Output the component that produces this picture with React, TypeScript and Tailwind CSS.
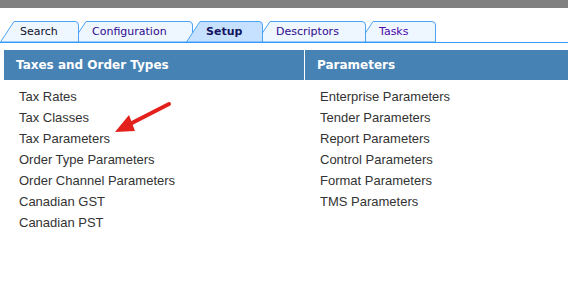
import React from "react";

type Tab = {
  label: string;
  w: number;
  cls: string;
  text: string;
  active?: boolean;
};

const tabs: Tab[] = [
  { label: "Search", w: 79, cls: "w-[79px] z-50", text: "text-[#101028]" },
  { label: "Configuration", w: 121, cls: "w-[121px] z-40 -ml-[7px]", text: "text-[#2e0a8e]" },
  { label: "Setup", w: 77, cls: "w-[77px] z-[60] -ml-[7px]", text: "text-[#141460] font-bold", active: true },
  { label: "Descriptors", w: 110, cls: "w-[110px] z-20 -ml-[7px]", text: "text-[#2e0a8e]" },
  { label: "Tasks", w: 77, cls: "w-[77px] z-10 -ml-[7px]", text: "text-[#4a0aa8]" },
];

const taxes = [
  "Tax Rates",
  "Tax Classes",
  "Tax Parameters",
  "Order Type Parameters",
  "Order Channel Parameters",
  "Canadian GST",
  "Canadian PST",
];

const params = [
  "Enterprise Parameters",
  "Tender Parameters",
  "Report Parameters",
  "Control Parameters",
  "Format Parameters",
  "TMS Parameters",
];

// tab outline: slanted left side, rounded top right corner
const TabShape = ({ w, active }: { w: number; active?: boolean }) => (
  <svg width={w} height={21} className="absolute left-0 top-0">
    <path
      d={`M0.5 21 L14 0.5 L${w - 4} 0.5 Q${w - 0.5} 0.5 ${w - 0.5} 4 L${w - 0.5} 21 Z`}
      fill={active ? "#c6e1ff" : "#eef6ff"}
      stroke="#4da3f5"
      strokeWidth={1}
    />
  </svg>
);

export default function App() {
  return (
    <div className="relative h-[296px] w-full overflow-hidden bg-white">
      <div className="h-[8px] bg-[#808080]" />

      {/* tabs */}
      <div className="mt-[13px] flex h-[22px] border-b border-[#3399ff] font-['DejaVu_Sans',sans-serif] text-[11px]">
        {tabs.map((t) => (
          <div key={t.label} className={`relative h-[21px] ${t.cls}`}>
            <TabShape w={t.w} active={t.active} />
            <span className={`relative flex h-[21px] items-center pl-[20px] pt-[2px] ${t.text}`}>
              {t.label}
            </span>
          </div>
        ))}
      </div>

      <div className="mt-[7px] flex pl-[4px]">
        <div className="w-[300px]">
          <div className="flex h-[30px] items-center bg-[#4682b4] pl-[12px] font-['DejaVu_Sans',sans-serif] text-[12px] font-bold text-white">
            Taxes and Order Types
          </div>
          <ul className="pl-[15px] pt-[6px] font-['Liberation_Sans',Arial,sans-serif] text-[13px] leading-[21px] text-[#333]">
            {taxes.map((x) => (
              <li key={x}>{x}</li>
            ))}
          </ul>
        </div>
        <div className="ml-[1px] flex-1">
          <div className="flex h-[30px] items-center bg-[#4682b4] pl-[12px] font-['DejaVu_Sans',sans-serif] text-[12px] font-bold text-white">
            Parameters
          </div>
          <ul className="pl-[15px] pt-[6px] font-['Liberation_Sans',Arial,sans-serif] text-[13px] leading-[21px] text-[#333]">
            {params.map((x) => (
              <li key={x}>{x}</li>
            ))}
          </ul>
        </div>
      </div>

      {/* red annotation arrow */}
      <svg className="absolute left-0 top-0" width={568} height={296}>
        <line x1={169} y1={104} x2={128} y2={125} stroke="#e3201b" strokeWidth={4} strokeLinecap="round" />
        <polygon points="115,132 129,115 135,131" fill="#e3201b" />
      </svg>
    </div>
  );
}
